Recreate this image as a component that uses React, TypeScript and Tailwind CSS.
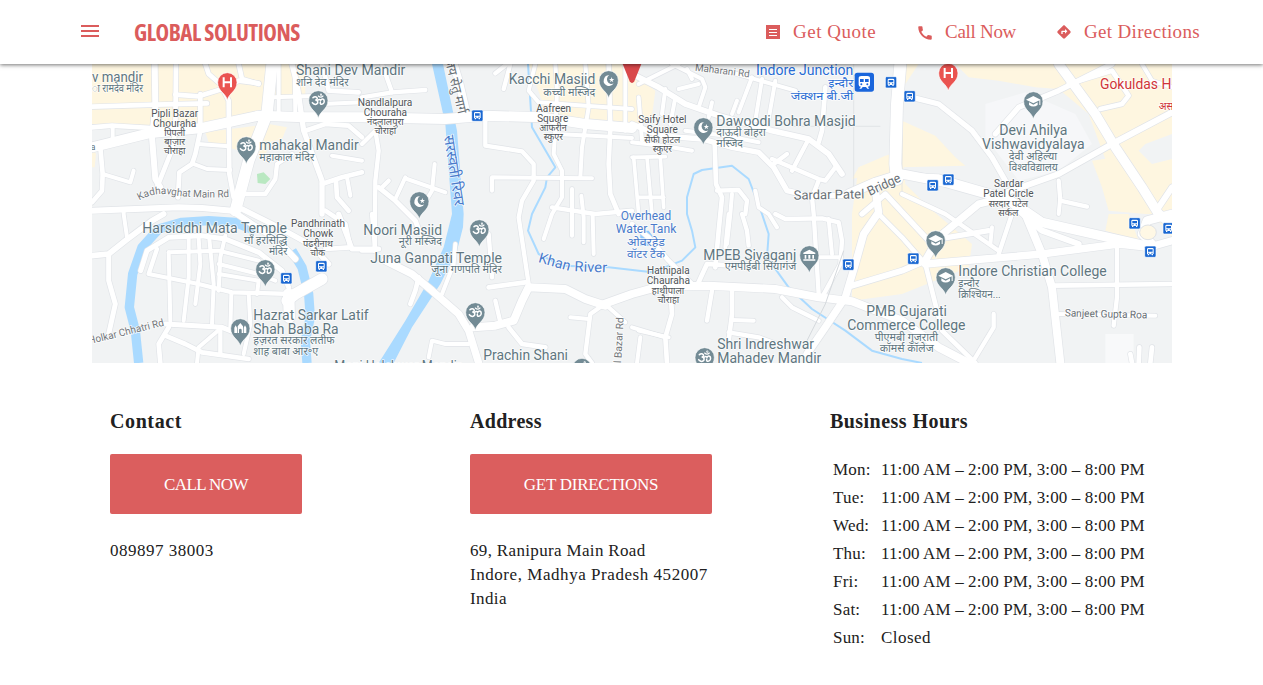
import React from "react";
import { MdMenu, MdCall, MdDirections } from "react-icons/md";

// Map geometry uses a 3240 x 897 grid, three units to a pixel.
type Road = [number, string];

const roads: Road[] = [
  // north west
  [14, "M0 128L190 122L345 118"],
  [18, "M188 0L190 130L180 220L190 345L205 370"],
  [14, "M252 0L250 205L235 270L195 370"],
  [14, "M250 92L320 97L400 72L440 50L500 58"],
  [14, "M340 0L350 30L385 60L410 110L412 330L425 400"],
  [14, "M440 0L450 45L500 60"],
  [14, "M325 90L325 200L310 270L300 300L262 325L258 400"],
  [12, "M318 240L410 247"],
  [12, "M300 298L345 315L415 318"],
  [14, "M0 190L60 185L180 192"],
  [12, "M62 185L62 220"],
  [14, "M25 250L32 330L30 380L0 415"],
  [12, "M32 330L115 355L125 320"],
  [30, "M0 250L170 208L330 192L500 155L640 160L810 160L1060 165L1180 155L1350 160L1480 180L1620 192"],
  [34, "M540 0L525 150L470 290L430 440"],
  [12, "M560 0L560 150"], [12, "M608 20L610 150"], [12, "M545 100L690 95"],
  [16, "M600 0L615 60L635 200L690 350L690 450"],
  [14, "M690 0L710 80L800 85"],
  [14, "M640 200L700 180L770 185L810 220"],
  [12, "M690 120L810 115"],
  [14, "M690 360L750 340L810 325"],
  [14, "M732 350L735 400L770 440"], [12, "M765 340L775 395"],
  [12, "M720 275L810 290"],
  [13, "M460 390L520 390L550 345L555 300L600 270"],
  [18, "M0 440L130 435L260 430L330 432L420 440L480 480L560 530L610 585"],
  [12, "M95 435L95 450L105 520"],
  [16, "M450 435L560 490L660 545L710 600"],
  [13, "M810 100L900 85L1000 78"], [13, "M870 0L900 85"],
  [24, "M1085 0L1100 50L1125 155"],
  [13, "M1210 28L1245 0"], [13, "M1235 75L1255 0"],
  [13, "M810 240L850 200L860 260L850 350L848 560"],
  [15, "M860 370L910 410L970 470L985 510"], [13, "M890 350L865 375"],
  [12, "M940 340L910 405"], [12, "M945 345L1060 385"], [12, "M1028 300L1020 380L990 430"],
  // centre north
  [13, "M1180 170L1180 245L1290 262L1325 300L1325 350L1290 410L1280 460L1295 560L1310 660"],
  [12, "M1200 380L1200 340L1500 343"],
  [12, "M1390 200L1385 270L1410 320L1410 400L1380 450L1355 525"],
  [12, "M1330 0L1320 40L1310 80L1340 115L1480 125L1620 135"],
  [12, "M1390 0L1395 80L1390 210L1500 215L1620 222"],
  [12, "M1480 0L1490 130L1480 190L1470 250L1465 340"],
  [14, "M1550 0L1555 190L1550 300L1555 390L1580 450"],
  [12, "M1600 0L1600 200"], [12, "M1440 375L1440 450L1440 515"], [12, "M1468 395L1475 460L1475 535"],
  [13, "M1380 430L1510 450L1620 440"], [12, "M1502 455L1505 570"],
  [16, "M1620 180L1700 215L1830 225L1920 250L2000 265L2045 310L2085 380L2150 395L2270 395"],
  [17, "M1620 30L1700 70L1780 120L1880 155L2040 200L2150 225L2210 270L2250 330"],
  [12, "M1640 60L1760 0"], [12, "M1740 0L1830 45L1840 70L1820 130"],
  [12, "M1760 75L1820 60"], [12, "M1800 45L1785 15"], [12, "M1720 75L1710 150"],
  [12, "M1750 100L1735 180"], [12, "M1640 100L1650 230"], [12, "M1620 235L1740 250L1800 260"],
  [12, "M1780 200L1900 215L2000 235"], [12, "M1860 115L1850 160"],
  [12, "M1980 40L1940 145"], [12, "M2010 45L1990 170"], [12, "M2050 50L2030 165"], [12, "M1900 20L2110 80"],
  [12, "M1920 150L1935 110"], [14, "M2200 70L2190 200L2180 235"],
  [13, "M2150 225L2100 320"], [13, "M2040 285L2180 345L2200 350L2230 310"], [13, "M2045 300L2085 270"],
  [13, "M2180 350L2160 400L2165 450L2180 690"],
  [14, "M1868 240L1872 360L1890 400L1880 500L1870 610"],
  [13, "M1875 380L1940 378L1965 410L1960 450"], [12, "M1920 390L1915 450L1905 540"],
  [11, "M1620 280L1720 278"], [11, "M1625 280L1640 450"], [11, "M1665 280L1680 450"], [11, "M1705 280L1715 430"],
  [11, "M1640 400L1715 400"], [12, "M1990 380L2000 430L2030 450L2055 490"],
  // station and university quarter
  [36, "M2425 0L2415 120L2410 300L2415 345"],
  [16, "M2440 95L2540 120L2640 200L2700 280L2740 350"],
  [28, "M2270 390L2350 355L2430 330L2560 355L2720 400"],
  [18, "M2430 335L2540 340L2730 395L2850 500L2960 540"],
  [22, "M2350 380L2360 445L2315 510L2290 600L2260 700L2200 790L2145 870"],
  [16, "M2310 450L2380 390L2510 530L2690 500"],
  [28, "M2900 0L3010 150L3070 250L3150 370L3200 450L3240 480"],
  [28, "M2740 400L2850 475L3070 525L3180 550"],
  [22, "M2740 400L2660 420L2540 520L2500 590"],
  [18, "M2730 390L2900 330L3060 240L3240 145"],
  [16, "M2710 210L2780 130L2900 80L3060 0"],
  [14, "M2930 60L3060 20L3110 95L3090 120L3025 135"],
  [13, "M2900 350L2905 410L2985 428"], [12, "M2905 400L2900 450"],
  [13, "M2430 390L2560 450L2720 560"],
  [12, "M3150 0L3180 50L3240 70"], [18, "M3200 430L3240 370"],
  // east
  [22, "M2500 600L2850 570L3080 540L3170 550L3240 530"],
  [24, "M2800 450L2850 570L2880 670L2905 897"],
  [18, "M2500 590L2430 620L2280 665"],
  [14, "M2365 455L2430 520L2500 600L2525 700L2550 800L2650 897"],
  [13, "M2760 450L2720 570"], [12, "M2700 490L2695 540"],
  [14, "M2880 665L3240 660"], [13, "M3075 540L3075 700L3065 785"],
  [12, "M2895 750L3190 755"], [13, "M2705 750L2705 790L2640 897"],
  [14, "M3120 897L3115 870"], [14, "M3142 850L3140 897"], [14, "M3180 850L3175 897"],
  [26, "M3180 540L3150 510L3165 470L3240 450"],
  [13, "M2050 450L2080 465L2190 463L2240 475L2250 530L2245 600L2190 700"],
  [12, "M2210 465L2220 570"], [12, "M2180 580L2240 580"],
  [24, "M1530 722L1620 690L1700 668L1850 665L2050 675L2180 700L2280 712L2430 770L2540 850L2630 897"],
  [14, "M1620 480L1670 520L1730 590L1800 660L1815 665L1845 600L1920 605"],
  [13, "M1860 680L1845 770"], [14, "M1920 680L1920 750L1910 830"], [12, "M1920 768L1985 770"],
  [14, "M1735 670L1740 750L1720 820L1725 897"], [12, "M1640 800L1730 820"], [12, "M1645 820L1635 897"],
  [12, "M1620 790L1720 820"], [13, "M1910 805L2000 820L2080 850"], [13, "M2070 700L2100 730L2180 770"],
  [13, "M1950 450L1965 500L1970 545"], [12, "M1910 450L1900 550"],
  // south centre
  [24, "M1540 725L1480 705L1420 675L1310 670L1290 710L1265 770L1210 785L1145 790"],
  [14, "M1190 670L1300 655"], [13, "M1190 510L1200 640"], [13, "M1210 710L1225 775"],
  [14, "M1250 790L1290 840L1360 850"], [12, "M1010 880L1020 830L1060 840L1130 840"],
  [13, "M1530 725L1495 750L1480 870L1500 897"], [12, "M1435 760L1490 765"], [12, "M1550 730L1600 775"],
  [22, "M880 590L960 630L1020 680L1100 750L1130 800L1160 897"],
  [14, "M980 640L970 680L955 720"], [12, "M1050 690L1085 600L1090 540"],
  [13, "M840 450L850 560L810 560"],
  // south west
  [17, "M0 575L50 570L100 530L180 470L215 450"],
  [15, "M50 570L50 650L70 720L50 810"],
  [15, "M146 620L165 560L230 520L330 515L400 525L500 565L570 620L590 670"],
  [13, "M195 555L170 630L320 660L420 685L600 690"],
  [12, "M290 525L290 640L275 770"], [12, "M320 525L325 600L310 720"], [12, "M352 525L365 660L360 780"],
  [12, "M230 565L235 770"], [12, "M230 565L380 560L500 590"], [12, "M400 515L385 580L380 680"],
  [12, "M380 600L500 630L550 650"], [12, "M380 630L500 650L495 690"], [12, "M418 690L415 790"],
  [15, "M220 780L390 790L440 810"],
  [14, "M230 790L200 840L205 897"], [14, "M220 815L280 840L330 865L470 885"],
  [12, "M390 790L320 850L315 897"], [12, "M470 690L475 780L455 870"],
  [13, "M385 800L385 870"],
  [34, "M585 710L610 690L690 645"], [34, "M590 690L592 760"],
  [15, "M740 450L780 555L860 555"], [14, "M700 440L760 480L775 550L700 555"],
];

const buses: [number, number][] = [
  [1156, 155], [2397, 55], [2453, 97], [2522, 364], [2569, 347],
  [583, 643], [688, 607], [2269, 602], [2464, 584], [3128, 478], [3230, 493], [3175, 563],
];

type Label = {
  x: number; y: number; w: number; t: string; s?: number; c?: string; r?: number; a?: "start" | "middle" | "end";
};

const slate = "#607680";
const dark = "#505458";
const blue = "#4a7bcb";
const link = "#2a6dd4";
const red = "#d0343a";

const labels: Label[] = [
  { x: 0, y: 53, w: 153, t: "v mandir", s: 42 },
  { x: 0, y: 84, w: 153, t: "ा रामदेव मंदिर", s: 32 },
  { x: 248, y: 158, w: 141, t: "Pipli Bazar", s: 33, c: dark, a: "middle" },
  { x: 248, y: 188, w: 130, t: "Chouraha", s: 33, c: dark, a: "middle" },
  { x: 248, y: 215, w: 63, t: "पिपली", s: 29, c: dark, a: "middle" },
  { x: 248, y: 242, w: 63, t: "बाज़ार", s: 29, c: dark, a: "middle" },
  { x: 248, y: 270, w: 65, t: "चौराहा", s: 29, c: dark, a: "middle" },
  { x: 612, y: 34, w: 328, t: "Shani Dev Mandir", s: 43 },
  { x: 612, y: 65, w: 158, t: "शनि देव मंदिर", s: 32 },
  { x: 502, y: 257, w: 298, t: "mahakal Mandir", s: 43 },
  { x: 502, y: 292, w: 165, t: "महाकाल मंदिर", s: 32 },
  { x: 879, y: 125, w: 164, t: "Nandlalpura", s: 33, c: dark, a: "middle" },
  { x: 880, y: 155, w: 130, t: "Chouraha", s: 33, c: dark, a: "middle" },
  { x: 880, y: 183, w: 110, t: "नंदलालपुरा", s: 29, c: dark, a: "middle" },
  { x: 880, y: 210, w: 65, t: "चौराहा", s: 29, c: dark, a: "middle" },
  { x: -4, y: 258, w: 14, t: "a", s: 28 },
  { x: 1250, y: 60, w: 260, t: "Kacchi Masjid", s: 43 },
  { x: 1510, y: 96, w: 156, t: "कच्ची मस्जिद", s: 32, a: "end" },
  { x: 1385, y: 144, w: 105, t: "Aafreen", s: 33, c: dark, a: "middle" },
  { x: 1382, y: 174, w: 93, t: "Square", s: 33, c: dark, a: "middle" },
  { x: 1383, y: 201, w: 82, t: "आफरीन", s: 29, c: dark, a: "middle" },
  { x: 1384, y: 229, w: 58, t: "स्कुएर", s: 29, c: dark, a: "middle" },
  { x: 1808, y: 20, w: 165, t: "Maharani Rd", s: 30, c: "#73777b", r: 7 },
  { x: 1992, y: 34, w: 292, t: "Indore Junction", s: 43, c: link },
  { x: 2284, y: 70, w: 75, t: "इन्दौर", s: 34, c: link, a: "end" },
  { x: 2284, y: 109, w: 188, t: "जंक्शन बी.जी", s: 34, c: link, a: "end" },
  { x: 1711, y: 178, w: 145, t: "Saify Hotel", s: 33, c: dark, a: "middle" },
  { x: 1711, y: 208, w: 93, t: "Square", s: 33, c: dark, a: "middle" },
  { x: 1711, y: 237, w: 108, t: "सैफी होटल", s: 29, c: dark, a: "middle" },
  { x: 1711, y: 265, w: 58, t: "स्कुएर", s: 29, c: dark, a: "middle" },
  { x: 1873, y: 186, w: 418, t: "Dawoodi Bohra Masjid", s: 43 },
  { x: 1873, y: 217, w: 148, t: "दाऊदी बोहरा", s: 32 },
  { x: 1873, y: 250, w: 80, t: "मस्जिद", s: 32 },
  { x: 2105, y: 407, w: 212, t: "Sardar Patel", s: 39, c: "#686f75", r: -1 },
  { x: 2333, y: 396, w: 106, t: "Bridge", s: 39, c: "#686f75", r: -25 },
  { x: 2824, y: 212, w: 205, t: "Devi Ahilya", s: 43, a: "middle" },
  { x: 2824, y: 255, w: 308, t: "Vishwavidyalaya", s: 43, a: "middle" },
  { x: 2823, y: 287, w: 145, t: "देवी अहिल्या", s: 32, a: "middle" },
  { x: 2824, y: 321, w: 147, t: "विश्वविद्यालय", s: 32, a: "middle" },
  { x: 2750, y: 369, w: 88, t: "Sardar", s: 33, c: dark, a: "middle" },
  { x: 2749, y: 399, w: 151, t: "Patel Circle", s: 33, c: dark, a: "middle" },
  { x: 2749, y: 428, w: 118, t: "सरदार पटेल", s: 29, c: dark, a: "middle" },
  { x: 2749, y: 456, w: 60, t: "सर्कल", s: 29, c: dark, a: "middle" },
  { x: 3024, y: 74, w: 214, t: "Gokuldas H", s: 42, c: red },
  { x: 3200, y: 137, w: 44, t: "अस", s: 32, c: red },
  { x: 151, y: 506, w: 434, t: "Harsiddhi Mata Temple", s: 43 },
  { x: 586, y: 540, w: 130, t: "माँ हरसिद्धि", s: 32, a: "end" },
  { x: 586, y: 572, w: 55, t: "मंदिर", s: 32, a: "end" },
  { x: 678, y: 489, w: 162, t: "Pandhrinath", s: 33, c: dark, a: "middle" },
  { x: 679, y: 519, w: 90, t: "Chowk", s: 33, c: dark, a: "middle" },
  { x: 678, y: 549, w: 90, t: "पंढरीनाथ", s: 29, c: dark, a: "middle" },
  { x: 677, y: 575, w: 44, t: "चौक", s: 29, c: dark, a: "middle" },
  { x: -8, y: 841, w: 232, t: "Holkar Chhatri Rd", s: 31, c: "#73777b", r: -14 },
  { x: 484, y: 768, w: 346, t: "Hazrat Sarkar Latif", s: 43 },
  { x: 484, y: 810, w: 256, t: "Shah Baba Ra", s: 43 },
  { x: 484, y: 840, w: 244, t: "हज़रत सरकार लतीफ", s: 32 },
  { x: 484, y: 873, w: 195, t: "शाह बाबा आर॰ए", s: 32 },
  { x: 727, y: 920, w: 380, t: "Moni Halshwar Mandir", s: 43 },
  { x: 814, y: 513, w: 236, t: "Noori Masjid", s: 43 },
  { x: 1050, y: 543, w: 130, t: "नूरी मस्जिद", s: 32, a: "end" },
  { x: 835, y: 597, w: 395, t: "Juna Ganpati Temple", s: 43 },
  { x: 1230, y: 627, w: 212, t: "जूना गणपति मंदिर", s: 32, a: "end" },
  { x: 1174, y: 888, w: 254, t: "Prachin Shani", s: 43 },
  { x: 1337, y: 594, w: 98, t: "Khan", s: 43, c: blue, r: 16 },
  { x: 1447, y: 622, w: 98, t: "River", s: 43, c: blue, r: 2 },
  { x: 1662, y: 468, w: 151, t: "Overhead", s: 38, c: blue, a: "middle" },
  { x: 1662, y: 507, w: 182, t: "Water Tank", s: 38, c: blue, a: "middle" },
  { x: 1662, y: 545, w: 114, t: "ओवरहेड", s: 34, c: blue, a: "middle" },
  { x: 1662, y: 583, w: 114, t: "वॉटर टैंक", s: 34, c: blue, a: "middle" },
  { x: 1729, y: 631, w: 128, t: "Hathipala", s: 33, c: dark, a: "middle" },
  { x: 1729, y: 661, w: 130, t: "Chauraha", s: 33, c: dark, a: "middle" },
  { x: 1728, y: 690, w: 97, t: "हाथीपाला", s: 29, c: dark, a: "middle" },
  { x: 1729, y: 717, w: 65, t: "चौराहा", s: 29, c: dark, a: "middle" },
  { x: 1834, y: 588, w: 279, t: "MPEB Sivaganj", s: 43 },
  { x: 2113, y: 617, w: 215, t: "एमपीईबी सियागंज", s: 32, a: "end" },
  { x: 1876, y: 855, w: 290, t: "Shri Indreshwar", s: 43 },
  { x: 1876, y: 896, w: 312, t: "Mahadev Mandir", s: 43 },
  { x: 2444, y: 756, w: 242, t: "PMB Gujarati", s: 43, a: "middle" },
  { x: 2443, y: 798, w: 355, t: "Commerce College", s: 43, a: "middle" },
  { x: 2443, y: 830, w: 190, t: "पीएमबी गुजराती", s: 32, a: "middle" },
  { x: 2444, y: 863, w: 162, t: "कॉमर्स कॉलेज", s: 32, a: "middle" },
  { x: 2599, y: 636, w: 445, t: "Indore Christian College", s: 43 },
  { x: 2599, y: 669, w: 63, t: "इन्दौर", s: 32 },
  { x: 2599, y: 703, w: 127, t: "क्रिश्चियन...", s: 32 },
  { x: 2918, y: 757, w: 248, t: "Sanjeet Gupta Roa", s: 31, c: "#686f75", r: 1.5 },
  { x: 1587, y: 905, w: 145, t: "il Bazar Rd", s: 31, c: "#73777b", r: -87 },
  { x: 1058, y: -12, w: 168, t: "जय सेतु मार्ग", s: 40, c: "#686f75", r: 76 },
  { x: 1055, y: 216, w: 214, t: "सरस्वती रिवर", s: 44, c: blue, r: 81 },
];

function MapText({ x, y, w, t, s = 43, c = slate, r = 0, a = "start" }: Label) {
  return (
    <text
      x={x} y={y} fontSize={s} fill={c} textAnchor={a} textLength={w} lengthAdjust="spacingAndGlyphs"
      stroke="#ffffff" strokeWidth={5} strokeOpacity={0.8} strokeLinejoin="round" paintOrder="stroke"
      transform={r ? `rotate(${r} ${x} ${y})` : undefined}
    >
      {t}
    </text>
  );
}

type PinKind = "om" | "moon" | "school" | "museum" | "fort" | "hospital";

function Pin({ x, y, kind }: { x: number; y: number; kind: PinKind }) {
  return (
    <g transform={`translate(${x} ${y})`}>
      <path
        d="M0 54C-4 32-29 28-29 0A29 29 0 0 1 29 0C29 28 4 32 0 54Z"
        fill={kind === "hospital" ? "#ea5350" : "#738b95"} stroke="#fff" strokeWidth="2"
      />
      {kind === "om" && (
        <g fill="none" stroke="#fff" strokeWidth="4.5" strokeLinecap="round">
          <path d="M-16-8Q-9-14-4-8Q-1-2-9-1Q0 0-2 8Q-8 17-18 7" />
          <path d="M-3 1Q3-5 7 0Q12-8 17-1Q20 9 10 12Q5 12 6 6" />
          <path d="M0-13Q7-6 14-13" strokeWidth="3.5" />
          <circle cx="8" cy="-17" r="1" />
        </g>
      )}
      {kind === "moon" && (
        <g fill="#fff">
          <path d="M2-15A16 16 0 1 0 15 9A13 13 0 1 1 2-15Z" />
          <path d="M9-10L11-4L17-4L12 0L14 6L9 2L4 6L6 0L1-4L7-4Z" />
        </g>
      )}
      {kind === "school" && (
        <g fill="#fff">
          <path d="M0-16L22-5L0 6L-22-5Z" />
          <path d="M-13 3L0 10L13 3V11Q0 20-13 11Z" />
          <path d="M18-4H21V11H18Z" />
        </g>
      )}
      {kind === "museum" && (
        <path fill="#fff" d="M0-17L18-8V-4H-18V-8ZM-14-1H-9V10H-14ZM-3-1H3V10H-3ZM9-1H14V10H9ZM-18 12H18V16H-18Z" />
      )}
      {kind === "fort" && (
        <path fill="#fff" d="M-18 14V-2L-14-9L-10-2V14ZM10 14V-2L14-9L18-2V14ZM-8 14V-6L0-16L8-6V14H4V5A4 4 0 0 0-4 5V14Z" />
      )}
      {kind === "hospital" && <path d="M-11-15V15M11-15V15M-11 0H11" stroke="#fff" strokeWidth="6" />}
    </g>
  );
}

function BusStop({ x, y }: { x: number; y: number }) {
  return (
    <g transform={`translate(${x} ${y})`}>
      <rect x="-17" y="-17" width="34" height="34" rx="4" fill="#1967d2" stroke="#fff" strokeWidth="2" />
      <path fill="#fff" fillRule="evenodd" d="M-10-7Q-10-11-6-11H6Q10-11 10-7V7H8V11H4V8H-4V11H-8V7H-10ZM-7-7V0H7V-7Z" />
      <path fill="#1967d2" d="M-7 3H-3V6H-7ZM3 3H7V6H3Z" />
    </g>
  );
}

function CityMap() {
  return (
    <svg viewBox="0 0 3240 897" className="block h-[299px] w-[1080px] font-['Roboto','Noto_Sans',sans-serif]" aria-label="Map of Indore">
      <rect width="3240" height="897" fill="#f1f3f4" />
      <g fill="#fef6e0">
        <path d="M0 0H640V95H525L510 155L330 190L0 180Z" />
        <path d="M340 205L530 180L585 190L570 225L530 235L520 280L480 270L350 235Z" />
        <path d="M0 250L12 270L8 310H0Z" />
        <path d="M1310 0H1620L1650 50L1690 80L1680 155L1620 190L1340 165L1350 110Z" />
        <path d="M2425 0H2480L2440 60Z" />
        <path d="M2590 0H3240V210L3160 240L3140 260L3180 300L3240 285V450H3180L3060 340L2990 150L2900 75L2830 70L2720 50L2630 40Z" />
        <path d="M2430 170L2530 215L2590 280L2620 305L2430 310L2280 345L2300 310L2380 275L2430 260Z" />
        <path d="M2430 265L2300 310L2280 450V710L2430 690L2630 610L2640 540L2510 430L2440 360Z" />
        <path d="M3000 290L3070 280L3180 450L3240 520V450H3160L3050 440L3030 370Z" />
        <path d="M3050 450H3110L3140 530L3040 500Z" />
      </g>
      <path d="M2680 120L2800 85L2950 150L3000 240L2900 320L2780 350L2680 220Z" fill="#f6f7f9" />
      <path d="M3040 810H3125V897H3040Z" fill="#f8f9fa" />
      <path d="M495 330L515 325L535 345L520 360L497 357Z" fill="#b9e8c1" />
      <g stroke="#d9dce1" strokeWidth="2" fill="none">
        <path d="M2285 0V380" /><path d="M2100 187H2365" /><path d="M2430 0V390" />
      </g>

      <g fill="none" stroke="#aadaff" strokeLinejoin="round">
        <path strokeWidth="28" d="M490 500L430 475L350 470L270 475L200 495L150 550L122 630L112 730L130 800L140 897" />
        <path strokeWidth="28" d="M600 560L630 610L650 690L655 760L640 830L645 897" />
        <path strokeWidth="6" d="M1308 0L1320 190L1390 310L1365 340L1360 370L1320 450L1308 500L1340 570L1410 605L1550 610L1680 625L1770 590L1810 550L1800 500L1785 450V400L1805 330L1830 318L1920 305L1970 345L2010 450L2030 510L2025 580L2090 670L2160 735L2260 800L2340 860L2430 885L2490 897" />
      </g>
      <path fill="#aadaff" d="M1020 0H1053L1095 200L1115 450L1113 490L1095 560L1045 660L960 790L905 897H860L940 770L1010 650L1055 550L1080 450L1060 180Z" />
      <path fill="#8fcaff" d="M1645 500L1670 500L1685 520L1670 545H1645Z" />

      <g fill="none" stroke="#e1e4e8" strokeLinejoin="round" strokeLinecap="round">
        {roads.map(([w, d], i) => <path key={i} d={d} strokeWidth={w + 4} />)}
      </g>
      <g fill="none" stroke="#ffffff" strokeLinejoin="round" strokeLinecap="round">
        {roads.map(([w, d], i) => <path key={i} d={d} strokeWidth={w} />)}
      </g>
      <ellipse cx="3168" cy="505" rx="25" ry="22" fill="#fff8e5" stroke="#dfe2e6" strokeWidth="3" />
      <path d="M2255 560L2200 720L2140 840" fill="none" stroke="#d5d9dd" strokeWidth="3" />

      {labels.map((l, i) => <MapText key={i} {...l} />)}
      <path id="ghat-road" d="M142 410Q190 382 240 393Q310 404 420 399" fill="none" />
      <text fontSize="31" fill="#73777b" stroke="#fff" strokeWidth="4" paintOrder="stroke">
        <textPath href="#ghat-road" textLength="274" lengthAdjust="spacingAndGlyphs">Kadhavghat Main Rd</textPath>
      </text>

      <Pin x={406} y={55} kind="hospital" />
      <Pin x={2569} y={27} kind="hospital" />
      <Pin x={679} y={109} kind="om" />
      <Pin x={463} y={247} kind="om" />
      <Pin x={1550} y={49} kind="moon" />
      <Pin x={1834} y={190} kind="moon" />
      <Pin x={982} y={412} kind="moon" />
      <Pin x={2824} y={112} kind="school" />
      <Pin x={520} y={616} kind="om" />
      <Pin x={445} y={793} kind="fort" />
      <Pin x={1162} y={496} kind="om" />
      <Pin x={1150} y={745} kind="om" />
      <Pin x={1470} y={912} kind="om" />
      <Pin x={1838} y={880} kind="om" />
      <Pin x={2152} y={574} kind="museum" />
      <Pin x={2531} y={529} kind="school" />
      <Pin x={2561} y={640} kind="school" />
      <path d="M1592 0H1648L1627 52Q1620 62 1613 52Z" fill="#d9484b" />
      <g transform="translate(2317 54)">
        <rect x="-29" y="-28" width="58" height="57" rx="8" fill="#1a66dc" />
        <path fill="#fff" fillRule="evenodd" d="M-17-11Q-17-18-9-18H9Q17-18 17-11V8Q17 14 10 14L15 20H9L5 15H-5L-9 20H-15L-10 14Q-17 14-17 8ZM-13-9V0H-2V-9ZM2-9V0H13V-9Z" />
        <circle cx="-9" cy="7" r="3" fill="#1a66dc" /><circle cx="9" cy="7" r="3" fill="#1a66dc" />
      </g>
      {buses.map(([x, y]) => <BusStop key={`${x}-${y}`} x={x} y={y} />)}
    </svg>
  );
}

const days = ["Mon:", "Tue:", "Wed:", "Thu:", "Fri:", "Sat:", "Sun:"];

export default function App() {
  return (
    <div className="h-[685px] w-[1263px] overflow-hidden bg-white font-['Liberation_Serif',serif] text-[17px] text-[#212121]">
      <header className="relative z-10 flex h-16 items-center bg-white text-[#db5c5c] shadow-[0_1px_4px_rgba(0,0,0,0.55)]">
        <button className="ml-[78px] block pb-[2px]" aria-label="Menu">
          <MdMenu className="size-6" />
        </button>
        <h1 className="ml-8 w-[170px] font-['Open_Sans',sans-serif] text-[23px] leading-7 font-bold tracking-[-0.5px] whitespace-nowrap [font-stretch:75%]">GLOBAL SOLUTIONS</h1>
        <nav className="ml-auto flex items-center pr-[63px] text-[19px] leading-6 whitespace-nowrap">
          <a className="flex w-[151px] items-center">
            <svg viewBox="0 0 14 14" className="mr-[13px] ml-[1px] size-[14px]">
              <path fill="currentColor" d="M0 0h14v14H0z" />
              <path d="M3 4.5h8M3 7.5h8M3 10.5h8" stroke="#fff" strokeWidth="1" />
            </svg>
            <span className="tracking-[0.49px]">Get Quote</span>
          </a>
          <a className="flex w-[140px] items-center">
            <MdCall className="mr-[11px] size-[18px] translate-y-[1px]" />
            <span className="tracking-[-0.3px]">Call Now</span>
          </a>
          <a className="flex items-center">
            <MdDirections className="mr-[12px] size-4" />
            <span className="tracking-[0.33px]">Get Directions</span>
          </a>
        </nav>
      </header>
      <main>
        <div className="ml-[92px]"><CityMap /></div>
        <div className="ml-[110px] grid grid-cols-[360px_360px_1fr] pt-[44px]">
          <section>
            <h2 className="text-[20px] leading-7 font-bold tracking-[0.6px]">Contact</h2>
            <button className="mt-[19px] block h-[60px] w-48 rounded-xs bg-[#db5e5e] pt-[2px] tracking-[-0.6px] text-white">CALL NOW</button>
            <p className="mt-[25px] leading-6 tracking-[0.5px]">089897 38003</p>
          </section>
          <section>
            <h2 className="text-[20px] leading-7 font-bold tracking-[0.3px]">Address</h2>
            <button className="mt-[19px] block h-[60px] w-[242px] rounded-xs bg-[#db5e5e] pt-[2px] tracking-[-0.27px] text-white">GET DIRECTIONS</button>
            <address className="mt-[25px] leading-6 not-italic">
              <p className="tracking-[0.34px]">69, Ranipura Main Road</p>
              <p className="tracking-[0.55px]">Indore, Madhya Pradesh 452007</p>
              <p className="tracking-[0.4px]">India</p>
            </address>
          </section>
          <section>
            <h2 className="text-[20px] leading-7 font-bold tracking-[0.45px]">Business Hours</h2>
            <dl className="mt-[21px] ml-[3px] grid grid-cols-[48px_1fr] leading-7">
              {days.map((day) => (
                <React.Fragment key={day}>
                  <dt className="tracking-[0.2px]">{day}</dt>
                  {day === "Sun:"
                    ? <dd className="tracking-[0.45px]">Closed</dd>
                    : <dd className="tracking-[0.12px]">11:00 AM – 2:00 PM, 3:00 – 8:00 PM</dd>}
                </React.Fragment>
              ))}
            </dl>
          </section>
        </div>
      </main>
    </div>
  );
}
